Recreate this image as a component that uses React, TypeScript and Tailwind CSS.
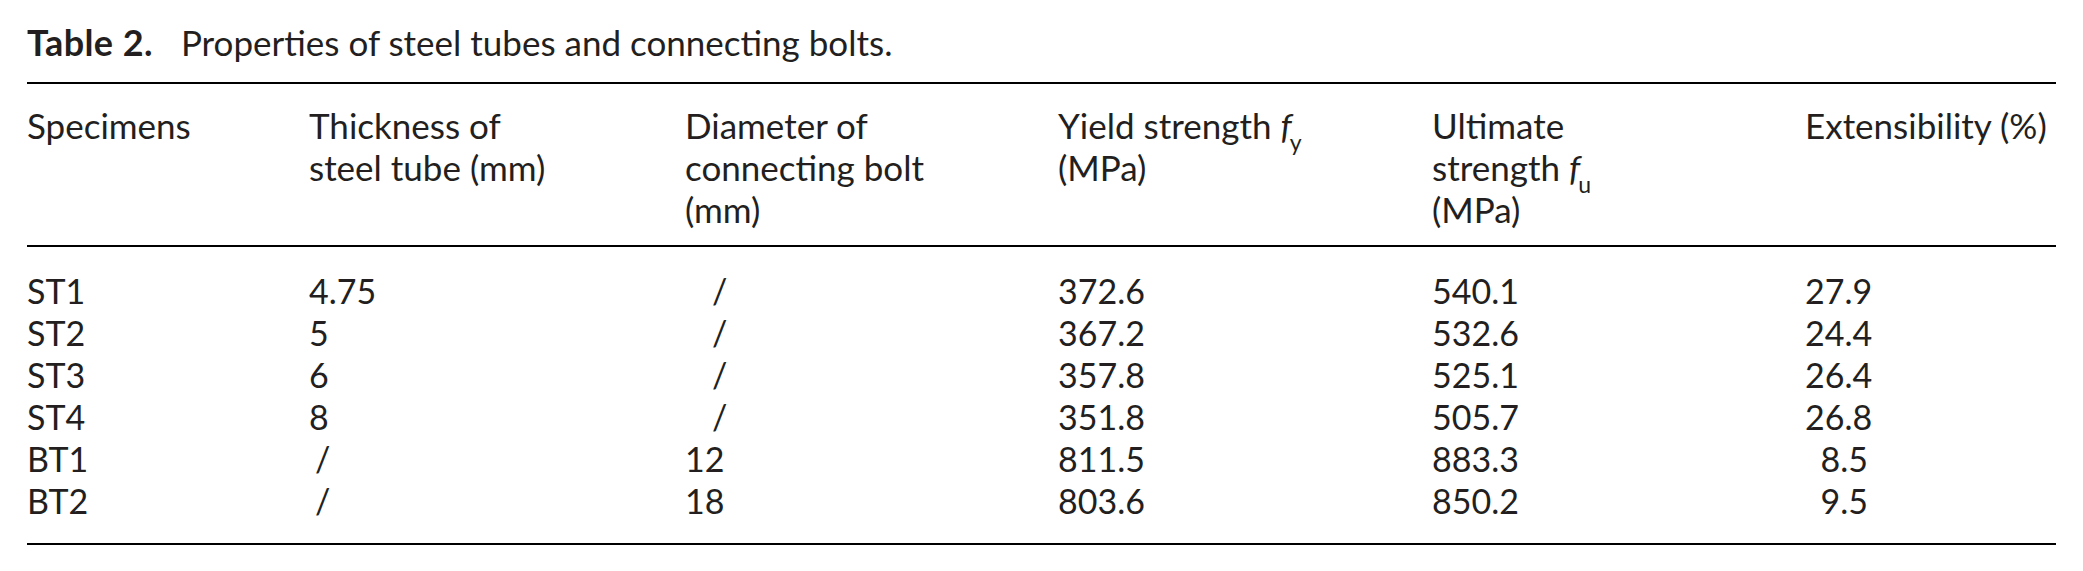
import React from "react";

const F = "Lato, 'Open Sans', sans-serif";

type Row = { s: string; t: string; d: string; y: string; u: string; e: string };

const rows: Row[] = [
  { s: "ST1", t: "4.75", d: "/", y: "372.6", u: "540.1", e: "27.9" },
  { s: "ST2", t: "5", d: "/", y: "367.2", u: "532.6", e: "24.4" },
  { s: "ST3", t: "6", d: "/", y: "357.8", u: "525.1", e: "26.4" },
  { s: "ST4", t: "8", d: "/", y: "351.8", u: "505.7", e: "26.8" },
  { s: "BT1", t: "/", d: "12", y: "811.5", u: "883.3", e: "8.5" },
  { s: "BT2", t: "/", d: "18", y: "803.6", u: "850.2", e: "9.5" },
];

const grid = "grid grid-cols-[282px_376px_373px_374px_373px_1fr]";

function Cell({ v, slashIndent }: { v: string; slashIndent: string }) {
  if (v === "/") return <div className={slashIndent}>/</div>;
  return <div>{v}</div>;
}

export default function App() {
  return (
    <div
      className="w-[2083px] h-[571px] bg-white text-[#231f20] px-[27px] overflow-hidden"
      style={{ fontFamily: F }}
    >
      <div className="pt-[21px] leading-[42px] h-[82px] text-[35px] whitespace-nowrap">
        <span className="font-bold text-[36px] tracking-[0.4px]">Table 2.</span>
        <span className="ml-[28px]">Properties of steel tubes and connecting bolts.</span>
      </div>
      <div className="border-t-2 border-black">
        <div
          className={`${grid} border-b-2 border-black pt-[20px] pb-[15px] leading-[42px] text-[35px]`}
        >
          <div>Specimens</div>
          <div>
            Thickness of
            <br />
            steel tube (mm)
          </div>
          <div>
            Diameter of
            <br />
            connecting bolt
            <br />
            (mm)
          </div>
          <div>
            Yield strength <i>f</i>
            <sub className="text-[23px] align-[-6px] ml-[-2px]">y</sub>
            <br />
            (MPa)
          </div>
          <div>
            Ultimate
            <br />
            strength <i>f</i>
            <sub className="text-[23px] align-[-6px] ml-[-2px]">u</sub>
            <br />
            (MPa)
          </div>
          <div className="text-right pr-[11px] whitespace-nowrap">Extensibility (%)</div>
        </div>
        <div className="border-b-2 border-black pt-[23px] pb-[21px] leading-[42px] text-[34px]">
          {rows.map((r) => (
            <div key={r.s} className={grid}>
              <div>{r.s}</div>
              <Cell v={r.t} slashIndent="pl-[6px]" />
              <Cell v={r.d} slashIndent="pl-[27px]" />
              <div>{r.y}</div>
              <div>{r.u}</div>
              <div>
                <div className="w-[63px] text-right">{r.e}</div>
              </div>
            </div>
          ))}
        </div>
      </div>
    </div>
  );
}
